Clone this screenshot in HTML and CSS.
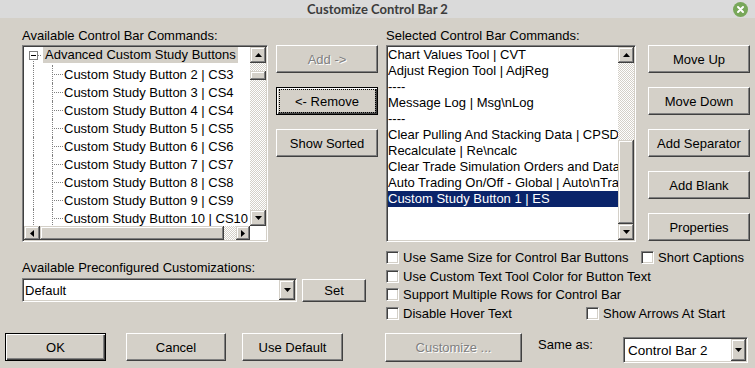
FILE: index.html
```html
<!DOCTYPE html>
<html>
<head>
<meta charset="utf-8">
<title>Customize Control Bar 2</title>
<link rel="stylesheet" href="styles.css">
</head>
<body>
<div class="window">
  <div class="titlebar">
    <span></span>
    <span class="title">Customize Control Bar 2</span>
    <span class="close"><svg width="15" height="15" viewBox="0 0 15 15"><circle cx="7.5" cy="7.5" r="7.5" fill="#78a75a"/><path d="M5 5 L10 10 M10 5 L5 10" stroke="#fff" stroke-width="2" stroke-linecap="round"/></svg></span>
  </div>

  <div class="top">
    <div class="avail">
      <div class="label">Available Control Bar Commands:</div>
      <div class="sunken tree">
        <div class="tree-rows">
          <div class="trow root"><i class="exp"></i><i class="hcon"></i><span class="hl">Advanced Custom Study Buttons</span></div>
          <div class="trow"><i class="v1"></i><i class="v2"></i><span class="ttext">Custom Study Button 2 | CS3</span></div>
          <div class="trow"><i class="v1"></i><i class="v2"></i><span class="ttext">Custom Study Button 3 | CS4</span></div>
          <div class="trow"><i class="v1"></i><i class="v2"></i><span class="ttext">Custom Study Button 4 | CS4</span></div>
          <div class="trow"><i class="v1"></i><i class="v2"></i><span class="ttext">Custom Study Button 5 | CS5</span></div>
          <div class="trow"><i class="v1"></i><i class="v2"></i><span class="ttext">Custom Study Button 6 | CS6</span></div>
          <div class="trow"><i class="v1"></i><i class="v2"></i><span class="ttext">Custom Study Button 7 | CS7</span></div>
          <div class="trow"><i class="v1"></i><i class="v2"></i><span class="ttext">Custom Study Button 8 | CS8</span></div>
          <div class="trow"><i class="v1"></i><i class="v2"></i><span class="ttext">Custom Study Button 9 | CS9</span></div>
          <div class="trow"><i class="v1"></i><i class="v2"></i><span class="ttext">Custom Study Button 10 | CS10</span></div>
        </div>
        <div class="vscroll">
          <div class="sbtn"><svg width="7" height="4" viewBox="0 0 7 4"><path d="M3.5 0 L7 4 L0 4 Z"/></svg></div>
          <div class="track t8"></div>
          <div class="thumb th9"></div>
          <div class="track grow"></div>
          <div class="sbtn"><svg width="7" height="4" viewBox="0 0 7 4"><path d="M0 0 L7 0 L3.5 4 Z"/></svg></div>
        </div>
        <div class="hscroll">
          <div class="sbtn hb16"><svg width="4" height="7" viewBox="0 0 4 7"><path d="M0 3.5 L4 0 L4 7 Z"/></svg></div>
          <div class="thumb hthumb"></div>
          <div class="track htrack"></div>
          <div class="sbtn hb14"><svg width="4" height="7" viewBox="0 0 4 7"><path d="M0 0 L4 3.5 L0 7 Z"/></svg></div>
        </div>
        <div class="corner"></div>
      </div>
    </div>

    <div class="btncol mid">
      <button class="btn disabled">Add -&gt;</button>
      <button class="btn default focus">&lt;- Remove</button>
      <button class="btn">Show Sorted</button>
    </div>

    <div class="selected">
      <div class="label">Selected Control Bar Commands:</div>
      <div class="sunken list">
        <div class="list-rows">
          <div class="lrow">Chart Values Tool | CVT</div>
          <div class="lrow">Adjust Region Tool | AdjReg</div>
          <div class="lrow">----</div>
          <div class="lrow">Message Log | Msg\nLog</div>
          <div class="lrow">----</div>
          <div class="lrow">Clear Pulling And Stacking Data | CPSD</div>
          <div class="lrow">Recalculate | Re\ncalc</div>
          <div class="lrow">Clear Trade Simulation Orders and Data | CTSO</div>
          <div class="lrow">Auto Trading On/Off - Global | Auto\nTrading</div>
          <div class="lrow sel">Custom Study Button 1 | ES</div>
        </div>
        <div class="vscroll">
          <div class="sbtn"><svg width="7" height="4" viewBox="0 0 7 4"><path d="M3.5 0 L7 4 L0 4 Z"/></svg></div>
          <div class="track t77"></div>
          <div class="thumb th84"></div>
          <div class="sbtn"><svg width="7" height="4" viewBox="0 0 7 4"><path d="M0 0 L7 0 L3.5 4 Z"/></svg></div>
        </div>
      </div>
    </div>

    <div class="btncol right">
      <button class="btn">Move Up</button>
      <button class="btn">Move Down</button>
      <button class="btn">Add Separator</button>
      <button class="btn">Add Blank</button>
      <button class="btn">Properties</button>
    </div>
  </div>

  <div class="bottom">
    <div class="preconf">
      <div class="label">Available Preconfigured Customizations:</div>
      <div class="pre-row">
        <div class="sunken combo combo1">
          <span class="ctext">Default</span>
          <div class="sbtn cbtn"><svg width="7" height="4" viewBox="0 0 7 4"><path d="M0 0 L7 0 L3.5 4 Z"/></svg></div>
        </div>
        <button class="btn set">Set</button>
      </div>
    </div>

    <div class="checks">
      <div class="crow">
        <label class="citem w255"><i class="cb"></i>Use Same Size for Control Bar Buttons</label>
        <label class="citem"><i class="cb"></i>Short Captions</label>
      </div>
      <div class="crow">
        <label class="citem"><i class="cb"></i>Use Custom Text Tool Color for Button Text</label>
      </div>
      <div class="crow">
        <label class="citem"><i class="cb"></i>Support Multiple Rows for Control Bar</label>
      </div>
      <div class="crow">
        <label class="citem w200"><i class="cb"></i>Disable Hover Text</label>
        <label class="citem"><i class="cb"></i>Show Arrows At Start</label>
      </div>
    </div>

    <div class="footer-left">
      <button class="btn default ok">OK</button>
      <button class="btn cancel">Cancel</button>
      <button class="btn usedef">Use Default</button>
    </div>

    <div class="footer-right">
      <button class="btn disabled customize">Customize ...</button>
      <span class="sameas">Same as:</span>
      <div class="sunken combo combo2">
        <span class="ctext">Control Bar 2</span>
        <div class="sbtn cbtn"><svg width="7" height="4" viewBox="0 0 7 4"><path d="M0 0 L7 0 L3.5 4 Z"/></svg></div>
      </div>
    </div>
  </div>
</div>
</body>
</html>
```

FILE: styles.css
```css
* { box-sizing: border-box; }
html, body { margin: 0; padding: 0; }
body {
  width: 755px;
  height: 368px;
  overflow: hidden;
  background: #d4d0c8;
  font-family: "Liberation Sans", Arial, sans-serif;
  font-size: 13px;
  color: #000;
}
.window { width: 755px; height: 368px; display: flex; flex-direction: column; }

/* title bar */
.titlebar {
  height: 18px;
  flex: none;
  background: #dadada;
  display: grid;
  grid-template-columns: 1fr auto 1fr;
  align-items: center;
}
.title {
  font-family: Lato, "DejaVu Sans", sans-serif;
  font-weight: bold;
  font-size: 13px;
  line-height: 18px;
  color: #3c3c3c;
}
.close { justify-self: end; margin-right: 7px; display: flex; }

/* top area */
.top { display: flex; padding: 10px 0 0 22px; height: 224px; flex: none; }
.label { line-height: 16px; height: 16px; margin-bottom: 1px; white-space: nowrap; }
.avail { width: 246px; flex: none; }
.selected { width: 250px; flex: none; margin-left: 8px; }
.btncol { width: 102px; flex: none; padding-top: 17px; display: flex; flex-direction: column; gap: 14px; }
.mid { margin-left: 8px; }
.right { margin-left: 12px; }

.sunken {
  border: 1px solid;
  border-color: #808080 #fff #fff #808080;
  padding: 1px;
  box-shadow: inset 1px 1px #404040, inset -1px -1px #d4d0c8;
  background: #fff;
}

/* tree */
.tree {
  height: 197px;
  display: grid;
  grid-template-columns: 226px 16px;
  grid-template-rows: 179px 14px;
}
.tree-rows { overflow: hidden; background: #fff; }
.trow { height: 18px; display: flex; align-items: center; white-space: nowrap; }
.root {
  align-items: flex-start;
  background: repeating-linear-gradient(#808080 0 1px, transparent 1px 2px) 9px 14px / 1px 4px no-repeat;
}
.exp {
  flex: none;
  width: 9px; height: 9px;
  margin: 4px 0 0 5px;
  border: 1px solid #808080;
  background: linear-gradient(#000, #000) center / 5px 1px no-repeat #fff;
}
.hcon {
  flex: none;
  width: 4px; height: 1px;
  margin-top: 8px;
  background: linear-gradient(90deg, #808080 50%, transparent 50%) 0 0 / 2px 1px repeat-x;
}
.hl { background: #d4d0c8; padding: 0 2px; margin-left: 1px; line-height: 16px; }
.v1 { flex: none; align-self: stretch; width: 19px; margin-left: 9px; border-left: 1px dotted #808080; }
.v2 {
  flex: none; align-self: stretch; width: 11px;
  border-left: 1px dotted #808080;
  background: linear-gradient(90deg, #808080 50%, transparent 50%) 1px 9px / 2px 1px repeat-x;
}
.ttext { margin-left: 1px; }

/* scrollbars */
.vscroll, .hscroll, .track {
  background-color: #fff;
  background-image: conic-gradient(#d4d0c8 25%, #fff 0 50%, #d4d0c8 0 75%, #fff 0);
  background-size: 2px 2px;
}
.vscroll { display: flex; flex-direction: column; }
.hscroll { display: flex; }
.sbtn, .thumb {
  flex: none;
  background: #d4d0c8;
  box-shadow: inset -1px -1px #404040, inset 1px 1px #d4d0c8, inset -2px -2px #808080, inset 2px 2px #fff;
}
.sbtn { width: 16px; height: 16px; display: flex; align-items: center; justify-content: center; }
.sbtn svg { display: block; }
.track { flex: none; }
.t8 { height: 8px; }
.t77 { height: 77px; }
.grow { flex: 1; }
.th9 { height: 9px; }
.th84 { height: 84px; }
.hb16 { width: 16px; height: 14px; }
.hb14 { width: 14px; height: 14px; }
.hthumb { width: 184px; height: 14px; }
.htrack { width: 12px; height: 14px; }
.corner { background: #fff; }

/* list */
.list {
  height: 197px;
  display: grid;
  grid-template-columns: 230px 16px;
  grid-template-rows: 193px;
}
.list-rows { overflow: hidden; background: #fff; }
.lrow { height: 16px; line-height: 16px; white-space: nowrap; overflow: hidden; padding-left: 0; }
.lrow.sel { background: #0a246a; color: #fff; }

/* buttons */
.btn {
  font: inherit;
  color: #000;
  background: #d4d0c8;
  padding: 0;
  margin: 0;
  height: 28px;
  width: 100%;
  text-align: center;
  border: 1px solid;
  border-color: #fff #404040 #404040 #fff;
  box-shadow: inset -1px -1px #808080;
  position: relative;
  flex: none;
}
.btn.default {
  border: 1px solid #000;
  box-shadow: inset 1px 1px #fff, inset -1px -1px #404040, inset -2px -2px #808080;
}
.btn.disabled { color: #808080; text-shadow: 1px 1px #fff; }
.btn.focus::after {
  content: "";
  position: absolute;
  inset: 1px 1px 1px 2px;
  border: 1px dotted #000;
}

/* bottom */
.bottom {
  display: grid;
  grid-template-columns: 386px 1fr;
  grid-template-rows: 91px 35px;
  flex: none;
}
.preconf { padding: 18px 0 0 22px; }
.preconf .label { margin-bottom: 2px; }
.pre-row { display: flex; gap: 5px; align-items: flex-start; }
.combo { display: flex; align-items: center; justify-content: space-between; }
.combo1 { width: 275px; height: 24px; }
.combo2 { width: 125px; height: 26px; margin-top: 4px; }
.ctext { padding-left: 1px; white-space: nowrap; }
.combo2 .ctext { padding-left: 3px; font-size: 13.5px; }
.cbtn { align-self: stretch; height: auto; }
.combo1 .cbtn { width: 16px; }
.combo2 .cbtn { width: 15px; }
.set { width: 64px; height: 23px; margin-top: 1px; }

.checks { padding-top: 6px; }
.crow { height: 18.7px; display: flex; align-items: center; white-space: nowrap; }
.citem { display: flex; align-items: center; }
.w255 { width: 255px; }
.w200 { width: 200px; }
.cb {
  flex: none;
  width: 13px; height: 13px;
  margin-right: 4px;
  border: 1px solid;
  border-color: #808080 #fff #fff #808080;
  box-shadow: inset 1px 1px #404040, inset -1px -1px #d4d0c8;
  background: #fff;
}

.footer-left { display: flex; align-items: flex-start; padding-left: 5px; }
.ok { width: 101px; height: 28px; }
.cancel { width: 100px; margin-left: 20px; }
.usedef { width: 101px; margin-left: 16px; }
.footer-right { display: flex; align-items: flex-start; margin-left: -1px; }
.customize { width: 137px; height: 29px; }
.sameas { margin-left: 16px; width: 85px; line-height: 16px; margin-top: 4px; flex: none; }
```
